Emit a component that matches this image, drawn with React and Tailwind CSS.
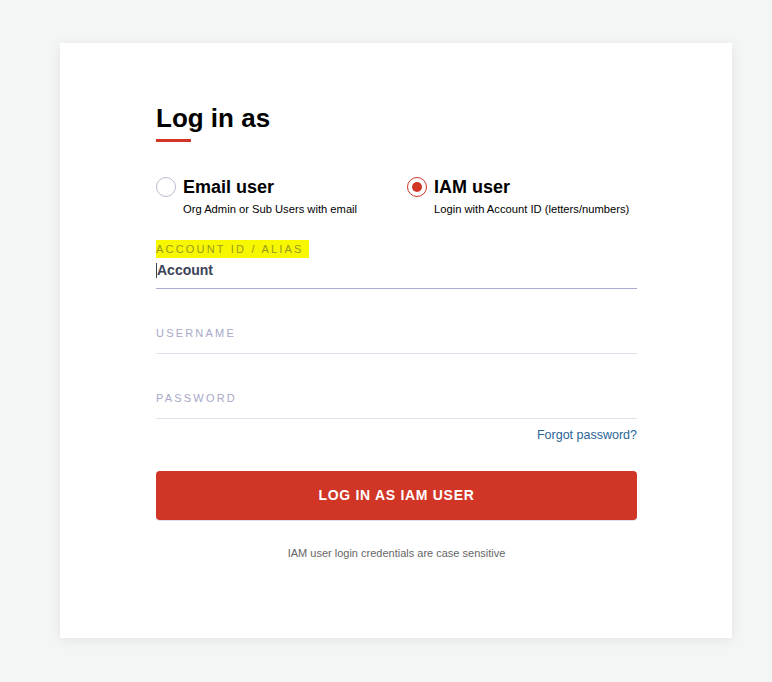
export default function App() {
  return (
    <div className="min-h-[682px] w-full bg-[#f4f5f5] pt-[43px] pl-[60px] font-['Liberation_Sans',Arial,sans-serif]">
      <div className="w-[672px] h-[595px] bg-white shadow-[0_2px_12px_rgba(0,0,0,0.08)] pl-[96px] pt-[58px]">
        <div className="w-[481px]">
          <h1 className="text-[26px] leading-[34px] font-bold text-black">Log in as</h1>
          <div className="mt-[4px] h-[3px] w-[35px] bg-[#d13526]" />

          <div className="mt-[34px] flex">
            <div className="w-[251px]">
              <div className="flex items-center gap-[7px]">
                <span className="h-[20px] w-[20px] rounded-full border border-[#b8bdcc] bg-white" />
                <span className="text-[18px] leading-[22px] font-bold text-black">Email user</span>
              </div>
              <p className="mt-[4px] pl-[27px] text-[11.2px] leading-[14px] text-black">Org Admin or Sub Users with email</p>
            </div>
            <div>
              <div className="flex items-center gap-[7px]">
                <span className="flex h-[20px] w-[20px] items-center justify-center rounded-full border border-[#d13526] bg-white">
                  <span className="h-[10px] w-[10px] rounded-full bg-[#d13526]" />
                </span>
                <span className="text-[18px] leading-[22px] font-bold text-black">IAM user</span>
              </div>
              <p className="mt-[4px] pl-[27px] text-[11.2px] leading-[14px] text-black">Login with Account ID (letters/numbers)</p>
            </div>
          </div>

          <div className="mt-[20px]">
            <span className="inline-block bg-[#f7f700] px-0 py-[3px] pr-[5px] text-[11px] leading-[12px] font-medium tracking-[0.2em] text-[#999920]">ACCOUNT ID / ALIAS</span>
            <div className="flex items-center border-b border-[#a9abd0] pb-[9px] pt-[1px]">
              <span className="h-[15px] w-px bg-[#3c4258]" />
              <span className="text-[14px] leading-[18px] font-bold text-[#3c4258]">Account</span>
            </div>
          </div>

          <div className="mt-[31px] border-b border-[#dfe1ec] pb-[9px]">
            <span className="text-[11px] leading-[12px] tracking-[0.2em] text-[#a8a8c8]">USERNAME</span>
          </div>

          <div className="mt-[31px] border-b border-[#dfe1ec] pb-[9px]">
            <span className="text-[11px] leading-[12px] tracking-[0.2em] text-[#a8a8c8]">PASSWORD</span>
          </div>

          <div className="mt-[9px] flex justify-end">
            <a className="text-[12.5px] leading-[14px] text-[#2a6496]">Forgot password?</a>
          </div>

          <button className="mt-[29px] flex h-[49px] w-full items-center justify-center rounded-[4px] bg-[#d13526] text-[14px] font-bold tracking-[0.05em] text-white shadow-[0_1px_0_#dfe1ec]">
            LOG IN AS IAM USER
          </button>

          <p className="mt-[26px] text-center text-[11px] leading-[14px] text-[#666]">IAM user login credentials are case sensitive</p>
        </div>
      </div>
    </div>
  );
}
